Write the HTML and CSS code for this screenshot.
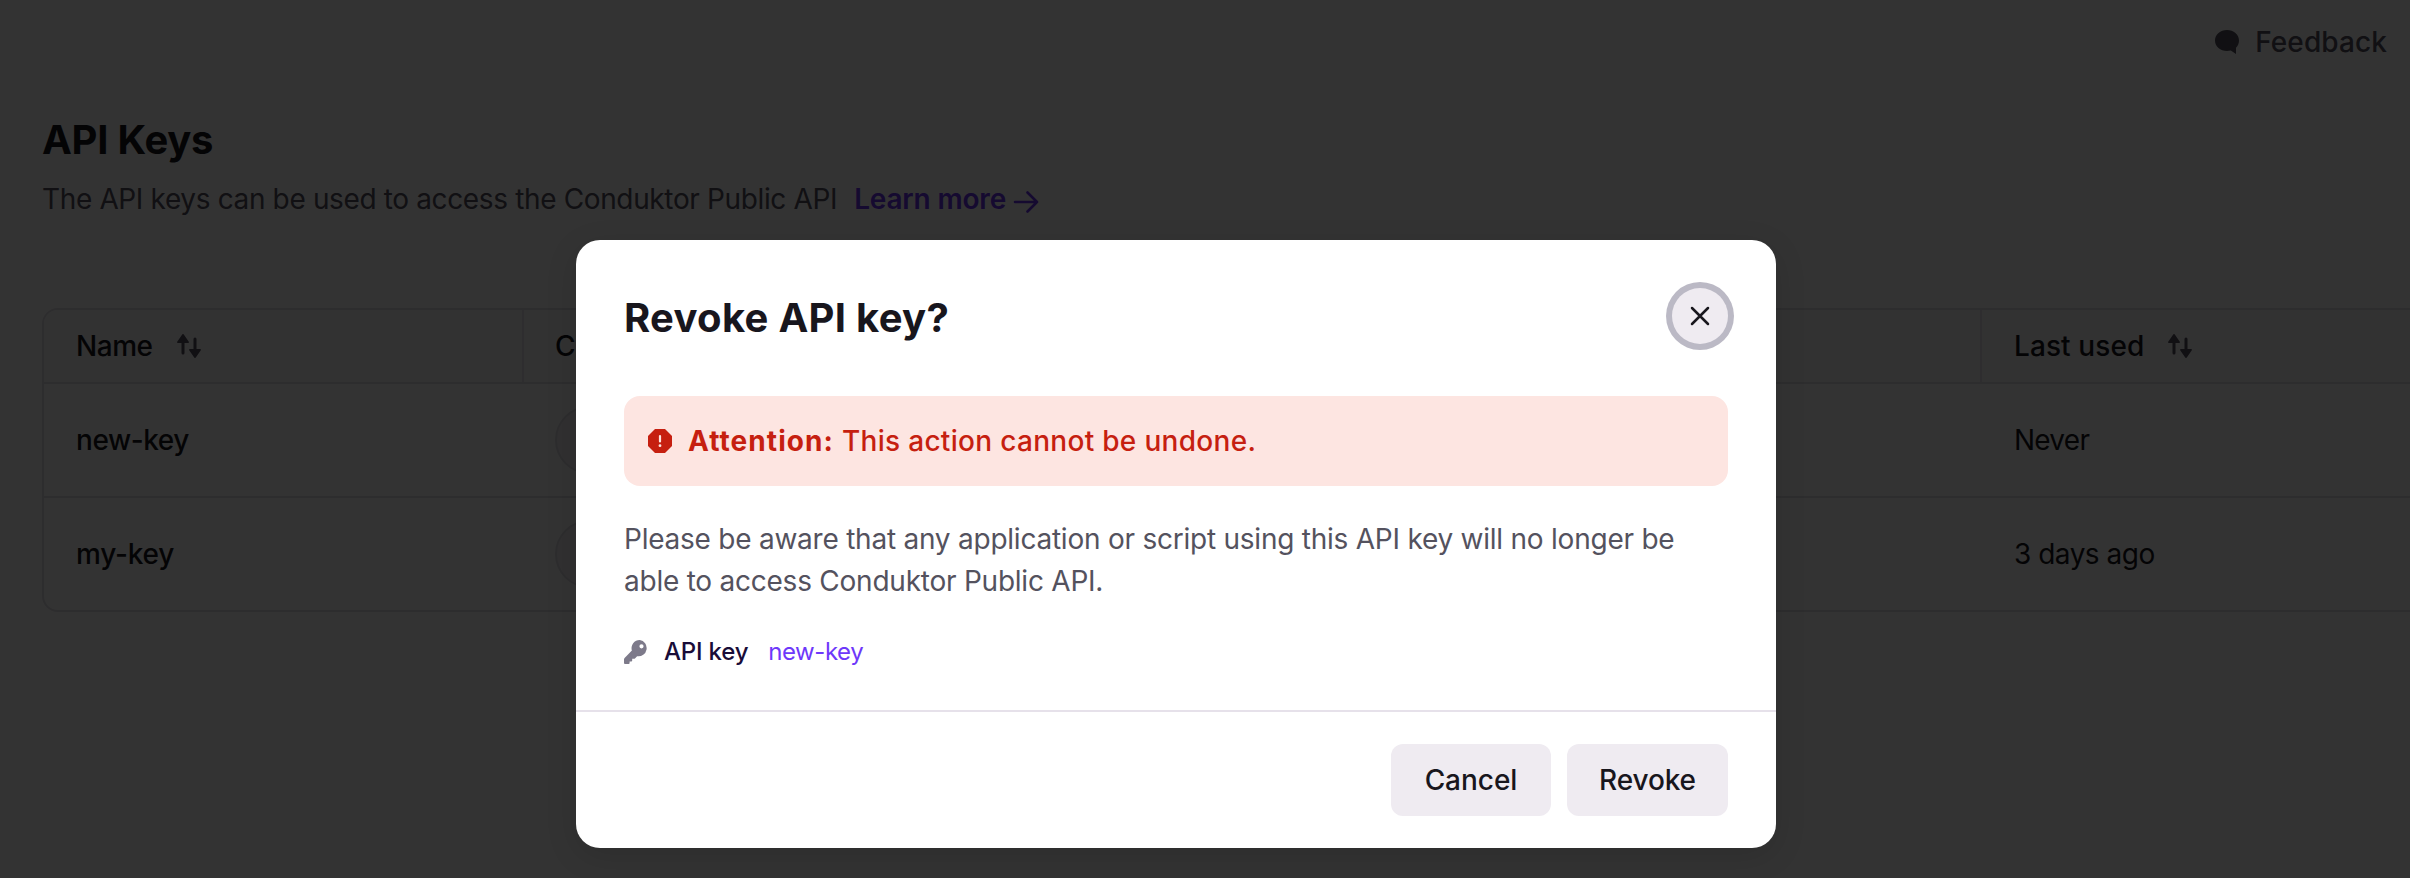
FILE: index.html
```html
<!DOCTYPE html>
<html lang="en">
<head>
<meta charset="utf-8">
<title>API Keys</title>
<link rel="stylesheet" href="styles.css">
</head>
<body>
<div class="page">
  <header class="topbar">
    <a class="feedback">
      <svg class="icon" viewBox="0 0 24 24"><path fill="currentColor" d="M12 0C5.400 0 0 4.600 0 10.500S5.400 21 12 21c1.300 0 2.600-.2 3.800-.5L21 24v-6.300c1.900-1.900 3-4.400 3-7.200C24 4.600 18.600 0 12 0z"/></svg>
      <span class="feedback-label">Feedback</span>
    </a>
  </header>
  <main class="content">
    <h1 class="title">API Keys</h1>
    <p class="subtitle">
      <span class="subtitle-text">The API keys can be used to access the Conduktor Public API</span>
      <a class="learn">
        <span class="learn-label">Learn more</span>
        <svg class="arrow" viewBox="0 0 26 24"><path d="M2 12h22M14.500 2.500L24 12l-9.500 9.500" fill="none" stroke="currentColor" stroke-width="2.600" stroke-linecap="round" stroke-linejoin="round"/></svg>
      </a>
    </p>
    <section class="table">
      <div class="row head">
        <div class="cell"><span class="th-name">Name</span>
          <svg class="icon sort" viewBox="0 0 24 24"><path fill="currentColor" d="M5.200.5a1 1 0 0 1 1.600 0l5 7.200a.8.8 0 0 1-.7 1.300H7.500V19a1.500 1.500 0 0 1-3 0V9H.9a.8.8 0 0 1-.7-1.300zM18.800 23.500a1 1 0 0 1-1.600 0l-5-7.200a.8.8 0 0 1 .7-1.300h3.600V5a1.500 1.500 0 0 1 3 0v10h3.600a.8.8 0 0 1 .7 1.300z"/></svg>
        </div>
        <div class="cell created">C</div>
        <div class="cell"><span class="th-used">Last used</span>
          <svg class="icon sort" viewBox="0 0 24 24"><path fill="currentColor" d="M5.200.5a1 1 0 0 1 1.600 0l5 7.200a.8.8 0 0 1-.7 1.300H7.500V19a1.500 1.500 0 0 1-3 0V9H.9a.8.8 0 0 1-.7-1.300zM18.800 23.500a1 1 0 0 1-1.600 0l-5-7.200a.8.8 0 0 1 .7-1.300h3.600V5a1.500 1.500 0 0 1 3 0v10h3.600a.8.8 0 0 1 .7 1.300z"/></svg>
        </div>
      </div>
      <div class="row">
        <div class="cell key-name">new-key</div>
        <div class="cell created"><span class="pill"></span></div>
        <div class="cell used never">Never</div>
      </div>
      <div class="row">
        <div class="cell key-name my">my-key</div>
        <div class="cell created"><span class="pill"></span></div>
        <div class="cell used">3 days ago</div>
      </div>
    </section>
  </main>
</div>
<div class="backdrop">
  <div class="modal" role="dialog">
    <div class="modal-body">
      <div class="modal-head">
        <h2 class="modal-title">Revoke API key?</h2>
        <button class="close" aria-label="Close">
          <svg class="close-icon" viewBox="0 0 20 20"><path d="M2 2l16 16M18 2L2 18" fill="none" stroke="currentColor" stroke-width="2.500" stroke-linecap="round"/></svg>
        </button>
      </div>
      <div class="alert">
        <svg class="icon" viewBox="0 0 24 24"><path fill="currentColor" d="M7 0h10l7 7v10l-7 7H7l-7-7V7z"/><path d="M12 7v5.500" stroke="#fde5e1" stroke-width="2.200" stroke-linecap="round"/><circle cx="12" cy="16.700" r="1.400" fill="#fde5e1"/></svg>
        <p class="alert-text"><strong class="alert-lead">Attention:</strong><span class="alert-msg">This action cannot be undone.</span></p>
      </div>
      <p class="desc">Please be aware that any application or script using this API key will no longer be<br>able to access Conduktor Public API.</p>
      <div class="key-row">
        <svg class="icon key-icon" viewBox="0 0 24 24"><path fill="currentColor" fill-rule="evenodd" d="M15.800 0a8.200 8.200 0 0 0-7.900 10.600L.6 17.900a2 2 0 0 0-.6 1.400V23a1 1 0 0 0 1 1h3.600a1 1 0 0 0 1-1v-1.600h1.600a1 1 0 0 0 1-1v-1.600h1.600a2 2 0 0 0 1.400-.6l1.900-2A8.200 8.200 0 1 0 15.800 0zm1.700 4.200a2.100 2.100 0 1 1 0 4.200 2.100 2.100 0 0 1 0-4.200z"/></svg>
        <span class="key-label">API key</span>
        <span class="key-value">new-key</span>
      </div>
    </div>
    <div class="modal-foot">
      <button class="btn cancel">Cancel</button>
      <button class="btn revoke">Revoke</button>
    </div>
  </div>
</div>
</body>
</html>
```

FILE: styles.css
```css
* { box-sizing: border-box; }
body {
  margin: 0;
  height: 878px;
  overflow: hidden;
  background: #fff;
  color: #18161d;
  font-family: Inter, "Liberation Sans", sans-serif;
  font-size: 28px;
  line-height: 42px;
}
h1, h2, p { margin: 0; }
button { border: 0; font: inherit; color: inherit; padding: 0; }
.icon { width: 24px; height: 24px; flex: none; display: block; }

.page { height: 878px; overflow: hidden; }
.topbar { height: 84px; display: flex; justify-content: flex-end; align-items: center; padding-right: 23px; color: #54525e; }
.feedback { display: flex; align-items: center; gap: 16px; font-weight: 500; }
.feedback-label { letter-spacing: 0.1px; }
.content { padding: 32px 0 0 42px; }
.title { font-size: 40px; line-height: 48px; font-weight: 700; letter-spacing: -0.25px; }
.subtitle { display: flex; margin-top: 14px; color: #54525e; }
.subtitle-text { letter-spacing: -0.36px; }
.learn { display: flex; gap: 7px; margin-left: 17px; color: #6b32f0; font-weight: 600; }
.learn-label { letter-spacing: -0.175px; }
.arrow { width: 26px; height: 24px; margin-top: 12px; }

.table { width: 2500px; margin-top: 88px; border: 2px solid #e2dee6; border-radius: 16px; overflow: hidden; }
.row { display: grid; grid-template-columns: 480px 1458px 1fr; height: 112px; }
.row + .row { border-top: 2px solid #e2dee6; height: 114px; }
.cell { display: flex; align-items: center; padding-left: 32px; }
.created { padding-left: 31px; }
.head { height: 72px; background: #f9f7fa; font-weight: 500; }
.head .cell + .cell { box-shadow: -2px 0 #e6e2e9; }
.th-name { letter-spacing: -0.449px; }
.th-used { letter-spacing: 0.103px; }
.sort { margin-left: 24px; color: #54525e; }
.key-name { font-weight: 500; letter-spacing: -0.455px; }
.my { letter-spacing: -0.223px; }
.used { letter-spacing: -0.5px; }
.never { letter-spacing: -0.75px; }
.pill { width: 300px; height: 68px; border: 2px solid #e2dee6; border-radius: 34px; background: #f4f1f6; }

.backdrop { position: absolute; inset: 0; padding: 240px 0 0 576px; background: rgba(0, 0, 0, 0.8); }
.modal { width: 1200px; height: 608px; border-radius: 24px; background: #fff; box-shadow: 0 8px 32px rgba(0, 0, 0, 0.12); }
.modal-body { height: 470px; padding: 48px 48px 0; }
.modal-head { display: flex; justify-content: space-between; align-items: center; height: 56px; }
.modal-title { font-size: 40px; line-height: 48px; font-weight: 700; letter-spacing: 0.3px; padding-top: 4px; }
.close { width: 56px; height: 56px; border-radius: 50%; background: #efebf1; box-shadow: 0 0 0 6px #bbb9c5; display: flex; align-items: center; justify-content: center; }
.close-icon { width: 20px; height: 20px; }
.alert { display: flex; align-items: center; gap: 16px; height: 90px; margin-top: 52px; padding-left: 24px; border-radius: 16px; background: #fde5e1; color: #c61f10; }
.alert-text { display: flex; gap: 8px; }
.alert-lead { font-weight: 700; letter-spacing: 1.062px; }
.alert-msg { font-weight: 500; letter-spacing: 0.306px; }
.desc { margin-top: 32px; color: #54525e; letter-spacing: -0.235px; }
.key-row { display: flex; align-items: center; height: 36px; margin-top: 32px; font-size: 24px; line-height: 36px; }
.key-icon { color: #7d7a8a; }
.key-label { margin-left: 16px; color: #190c38; font-weight: 500; letter-spacing: -0.2px; }
.key-value { margin-left: 20px; color: #6e38fa; letter-spacing: -0.45px; }
.modal-foot { display: flex; justify-content: flex-end; gap: 16px; height: 138px; padding: 32px 48px; border-top: 2px solid #e6e1ea; }
.btn { height: 72px; border-radius: 12px; background: #efebf1; font-weight: 500; }
.cancel { width: 160px; letter-spacing: -0.037px; }
.revoke { width: 161px; letter-spacing: -0.134px; }
```
